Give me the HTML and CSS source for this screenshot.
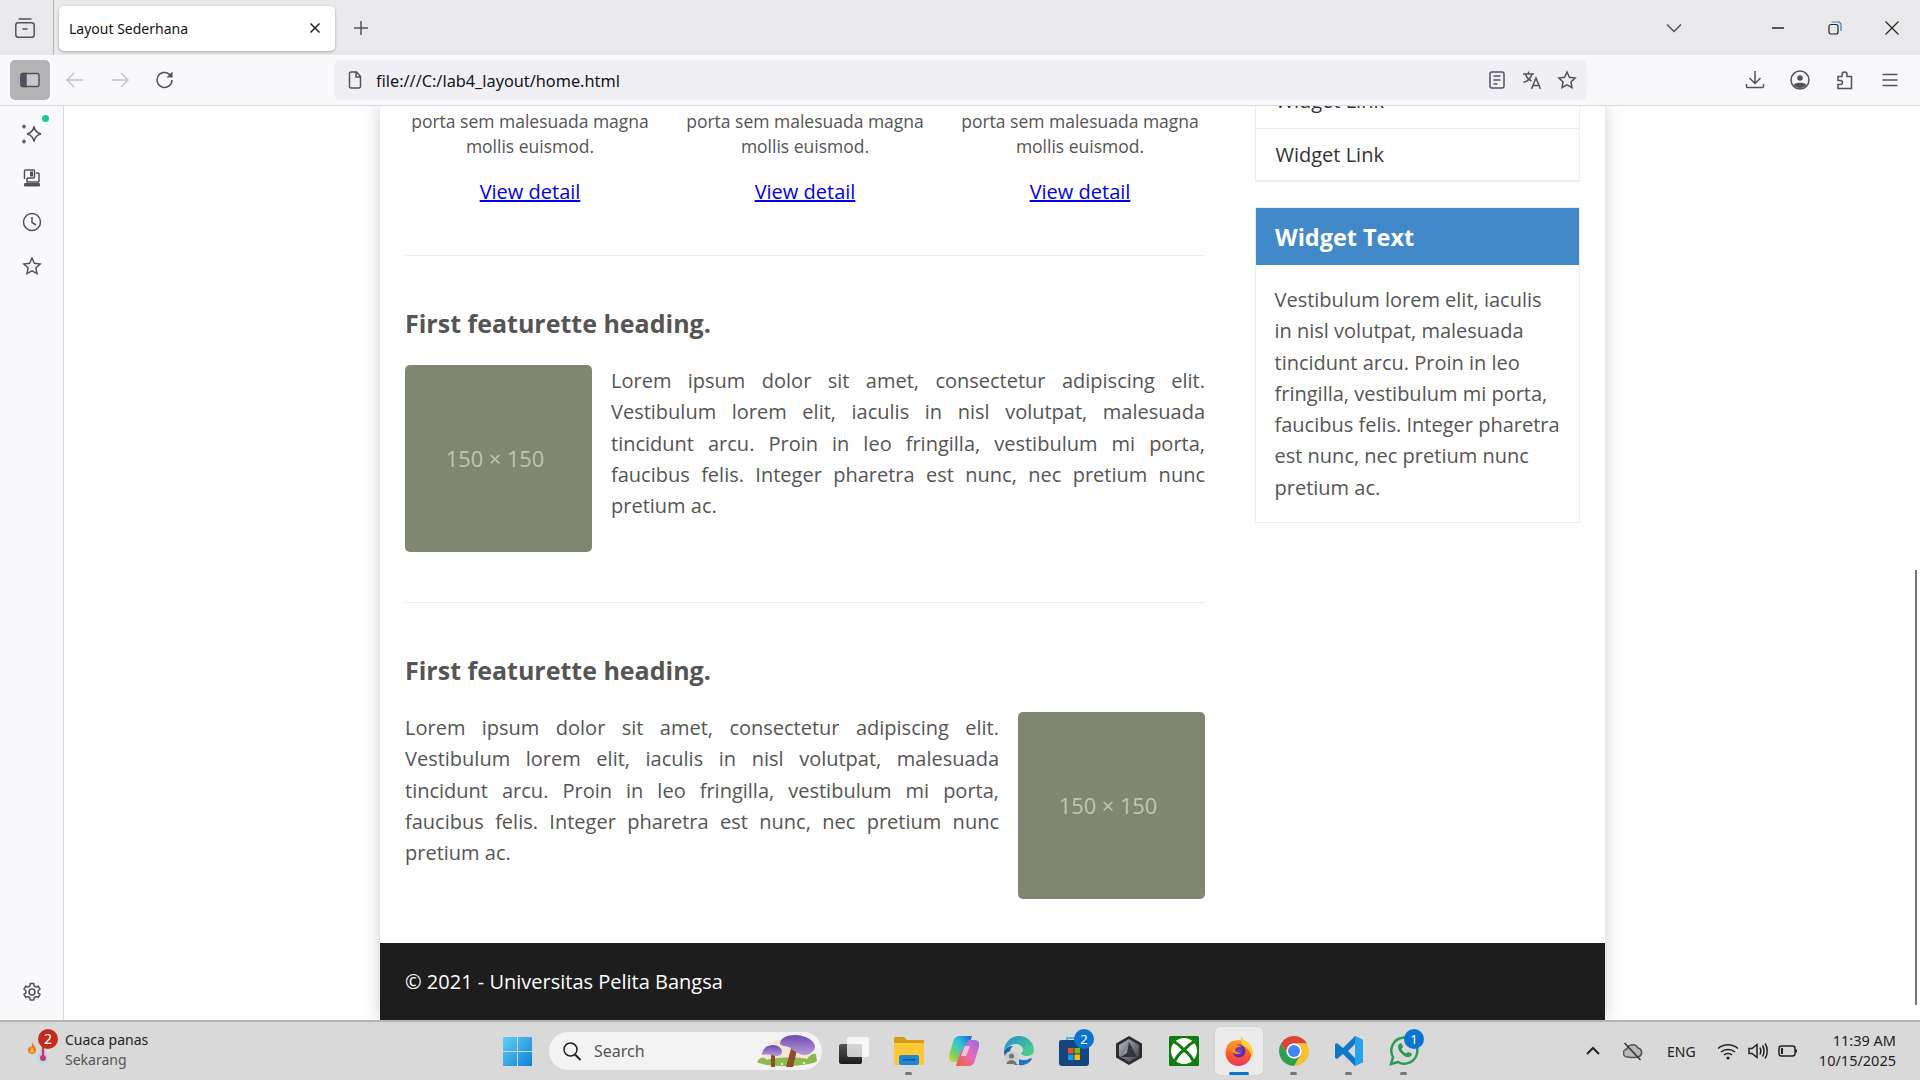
FILE: index.html
```html
<!DOCTYPE html>
<html lang="id">
<head>
<meta charset="utf-8">
<title>Layout Sederhana</title>
<link rel="stylesheet" href="styles.css">
</head>
<body>
<div class="frame">
  <header class="tabstrip">
    <div class="tabs-btn">
      <svg class="ic20" viewBox="0 0 20 20"><rect x=".8" y="4.800" width="18.400" height="14.400" rx="2.500"/><path d="M3.500 1h13M7.500 11h5"/></svg>
    </div>
    <div class="tab">
      <span class="tab-title">Layout Sederhana</span>
      <svg class="ic12 dark" viewBox="0 0 12 12"><path d="M1.500 1.500l9 9M10.500 1.500l-9 9"/></svg>
    </div>
    <div class="newtab"><svg class="ic16" viewBox="0 0 16 16"><path d="M8 1v14M1 8h14"/></svg></div>
    <div class="listtabs"><svg class="ic16" viewBox="0 0 16 16"><path d="M1 4.500l7 7 7-7"/></svg></div>
    <div class="winbtn"><svg class="ic12 dark" viewBox="0 0 12 12"><path d="M0 6h12"/></svg></div>
    <div class="winbtn"><svg class="ic14 dark" viewBox="0 0 14 14"><rect x="1" y="3.500" width="9" height="9.500" rx="2"/><path d="M3.500 1h6a3 3 0 0 1 3.500 3v6" stroke="#3b7fc4"/></svg></div>
    <div class="winbtn"><svg class="ic14 dark" viewBox="0 0 14 14"><path d="M.5.500l13 13M13.500.500l-13 13"/></svg></div>
  </header>

  <nav class="toolbar">
    <div class="tbtn active"><svg class="ic20" viewBox="0 0 20 20"><rect x="1" y="3.500" width="18" height="13" rx="2" fill="#c8c8cc"/><path d="M3 3.500h3v13H3a2 2 0 0 1-2-2v-9a2 2 0 0 1 2-2z" fill="#52525e"/></svg></div>
    <div class="tbtn muted"><svg class="ic20" viewBox="0 0 20 20"><path d="M18 10H2M9 3l-7 7 7 7"/></svg></div>
    <div class="tbtn muted"><svg class="ic20" viewBox="0 0 20 20"><path d="M2 10h16M11 3l7 7-7 7"/></svg></div>
    <div class="tbtn"><svg class="ic20" viewBox="0 0 20 20"><path d="M17 10a7.500 7.500 0 1 1-2.500-5.600L17 6.500"/><path d="M17.500 1.500v6h-6z" fill="#52525e" stroke="none"/></svg></div>
    <div class="urlbar">
      <svg class="ic20" viewBox="0 0 20 20"><path d="M4.500 3.500A1.500 1.500 0 0 1 6 2h5.500l4 4.500V16.500A1.500 1.500 0 0 1 14 18H6a1.500 1.500 0 0 1-1.500-1.500zM11 2v5h4.500"/></svg>
      <span class="urltext">file:///C:/lab4_layout/home.html</span>
      <div class="urlicons">
        <svg class="ic20" viewBox="0 0 20 20"><rect x="3" y="2" width="14" height="16" rx="2"/><path d="M6.500 6h7M6.500 10h7M6.500 14h4"/></svg>
        <svg class="ic20" viewBox="0 0 20 20"><path d="M1 4h11M6.500 1.500V4M10 4c-1 4-4 7-8.500 8.500M3.500 4c1 3.500 3 5.500 6 7M9.500 19l4.500-11 4.500 11M11 15.500h6"/></svg>
        <svg class="ic20" viewBox="0 0 20 20"><path d="M10 2l2.400 5.300 5.700.7-4.200 3.900 1.100 5.700L10 14.800l-5 2.800 1.100-5.700L1.900 8l5.700-.7z"/></svg>
      </div>
    </div>
    <div class="tools">
      <div class="tbtn"><svg class="ic20" viewBox="0 0 20 20"><path d="M10 1v12M4.500 8l5.500 5.500L15.500 8M1.500 14v2.500a1 1 0 0 0 1 1h15a1 1 0 0 0 1-1V14"/></svg></div>
      <div class="tbtn"><svg class="ic20" viewBox="0 0 20 20"><circle cx="10" cy="10" r="9"/><circle cx="10" cy="8" r="2.800" fill="#52525e" stroke="none"/><path d="M3.500 14.500c2-2.200 11-2.200 13 0-1.500 2-4 3.500-6.500 3.500s-5-1.500-6.500-3.500z" fill="#52525e" stroke="none"/></svg></div>
      <div class="tbtn"><svg class="ic20" viewBox="0 0 20 20"><path d="M3 6h4V4a2.500 2.500 0 0 1 5 0v2h4.500v12H3v-4h2.500a2 2 0 0 0 0-4H3z" transform="translate(0 .5)"/></svg></div>
      <div class="tbtn"><svg class="ic20" viewBox="0 0 20 20"><path d="M2.500 4.500h15M2.500 10h15M2.500 15.500h15"/></svg></div>
    </div>
  </nav>

  <div class="browser">
    <aside class="sidebar">
      <div class="sideitem sparkle-item">
        <span class="dot"></span>
        <svg class="ic22" viewBox="0 0 22 22"><path d="M13 3.500c.8 4 3 6.500 7 7.500-4 .8-6.200 3.200-7 7.500-.8-4.300-3-6.700-7-7.500 4-1 6.200-3.500 7-7.500zM3 1.500v4M1 3.500h4M3 16.500v4M1 18.500h4"/></svg>
      </div>
      <div class="sideitem"><svg class="ic20" viewBox="0 0 20 20"><path d="M2.500 11V3a1 1 0 0 1 1-1h8a1 1 0 0 1 1 1v6a1 1 0 0 1-1 1H5M14 5h2a1 1 0 0 1 1 1v8M5 10v4h12"/><rect x="2" y="15" width="16" height="3.500" rx="1" fill="#52525e" stroke="none"/><rect x="8" y="3.500" width="3" height="5" fill="#52525e" stroke="none"/></svg></div>
      <div class="sideitem"><svg class="ic20" viewBox="0 0 20 20"><circle cx="10" cy="10" r="8.500"/><path d="M10 5v5.500l4 2.500"/></svg></div>
      <div class="sideitem"><svg class="ic20" viewBox="0 0 20 20"><path d="M10 2l2.400 5.300 5.700.7-4.200 3.900 1.100 5.700L10 14.800l-5 2.800 1.100-5.700L1.900 8l5.700-.7z"/></svg></div>
      <div class="sideitem gear"><svg class="ic20" viewBox="0 0 20 20"><circle cx="10" cy="10" r="3"/><path d="M8.300 1.500h3.400l.5 2.500 1.700 1 2.400-.8 1.700 3-1.900 1.600v2l1.900 1.600-1.700 3-2.400-.8-1.700 1-.5 2.500H8.300l-.5-2.500-1.700-1-2.400.8-1.700-3 1.900-1.600v-2L2 7.200l1.700-3 2.400.8 1.700-1z"/></svg></div>
    </aside>

    <main class="viewport">
      <div class="wrapper">
        <div class="content">
          <section class="main">
            <div class="cols">
              <div class="col"><p class="col-text">porta sem malesuada magna mollis euismod.</p><a class="detail" href="#">View detail</a></div>
              <div class="col"><p class="col-text">porta sem malesuada magna mollis euismod.</p><a class="detail" href="#">View detail</a></div>
              <div class="col"><p class="col-text">porta sem malesuada magna mollis euismod.</p><a class="detail" href="#">View detail</a></div>
            </div>
            <hr class="rule first-rule">
            <article class="feature">
              <h2 class="feature-title">First featurette heading.</h2>
              <div class="feature-row">
                <div class="thumb"><span>150 × 150</span></div>
                <p class="feature-text">Lorem ipsum dolor sit amet, consectetur adipiscing elit. Vestibulum lorem elit, iaculis in nisl volutpat, malesuada tincidunt arcu. Proin in leo fringilla, vestibulum mi porta, faucibus felis. Integer pharetra est nunc, nec pretium nunc pretium ac.</p>
              </div>
            </article>
            <hr class="rule">
            <article class="feature">
              <h2 class="feature-title">First featurette heading.</h2>
              <div class="feature-row reverse">
                <div class="thumb"><span>150 × 150</span></div>
                <p class="feature-text">Lorem ipsum dolor sit amet, consectetur adipiscing elit. Vestibulum lorem elit, iaculis in nisl volutpat, malesuada tincidunt arcu. Proin in leo fringilla, vestibulum mi porta, faucibus felis. Integer pharetra est nunc, nec pretium nunc pretium ac.</p>
              </div>
            </article>
          </section>
          <section class="aside">
            <ul class="links">
              <li class="link">Widget Link</li>
              <li class="link">Widget Link</li>
            </ul>
            <div class="widget">
              <h3 class="widget-title">Widget Text</h3>
              <p class="widget-body">Vestibulum lorem elit, iaculis in nisl volutpat, malesuada tincidunt arcu. Proin in leo fringilla, vestibulum mi porta, faucibus felis. Integer pharetra est nunc, nec pretium nunc pretium ac.</p>
            </div>
          </section>
        </div>
        <footer class="footer">© 2021 - Universitas Pelita Bangsa</footer>
      </div>
      <div class="scrollthumb"></div>
    </main>
  </div>

  <div class="taskbar">
    <div class="weather">
      <div class="weather-ic">
        <svg class="ic28 plain" viewBox="0 0 28 28"><path d="M8 5c1 3 4 4.500 4 8 0 2.500-2 4-4 4s-4-1.500-4-4c0-2 1-3 2-4 0 1 .5 1.500 1 1.500C8 9 8 7 8 5z" fill="#f0702a"/><path d="M8 10.500c1 1.200 2 2.200 2 3.500 0 1.200-1 2-2 2s-2-.8-2-2c0-1.300 1.200-2.300 2-3.500z" fill="#fbc02d"/><circle cx="19" cy="21" r="6" fill="#b9d8f5"/><rect x="17.800" y="4" width="2.400" height="17" fill="#d6335a"/><circle cx="19" cy="21" r="3" fill="#d6335a"/></svg>
        <span class="badge red">2</span>
      </div>
      <div class="weather-text"><span>Cuaca panas</span><span class="sub">Sekarang</span></div>
    </div>
    <div class="center">
      <div class="winlogo"><svg class="ic29 plain" viewBox="0 0 29 29"><defs><linearGradient id="w1" x1="0" y1="0" x2="1" y2="1"><stop offset="0" stop-color="#5fd0f5"/><stop offset="1" stop-color="#0f7fd6"/></linearGradient></defs><path d="M0 1a1 1 0 0 1 1-1h13v14H0zM15 0h13a1 1 0 0 1 1 1v13H15zM0 15h14v14H1a1 1 0 0 1-1-1zM15 15h14v13a1 1 0 0 1-1 1H15z" fill="url(#w1)"/></svg></div>
      <div class="search">
        <svg class="ic20 dark" viewBox="0 0 20 20"><circle cx="8.500" cy="8.500" r="6.500"/><path d="M13 13.500l5.500 5.500" stroke-width="2"/></svg>
        <span class="search-text">Search</span>
        <svg class="mush plain" viewBox="0 0 60 32"><defs><linearGradient id="m1" x1="0" y1="0" x2="0" y2="1"><stop offset="0" stop-color="#6d4bb0"/><stop offset="1" stop-color="#b79ad8"/></linearGradient></defs><ellipse cx="30" cy="18" rx="24" ry="14" fill="#f3e6d6"/><path d="M0 27c4-6 7-5 10-2 8-3 30-3 40-1 3-4 6-6 9-5l1 7c-8 6-50 7-60 1z" fill="#8fb84f"/><path d="M35 10l6 1-5 21h-7z" fill="#8a4f2a"/><path d="M14 18h4v14h-4z" fill="#8a4f2a"/><path d="M23 9C23 3 30 0 38 0c10 0 19 5 20 11 .5 4-4 9-11 9-7-1-11-5-15-8-3-1-7-1-9-3z" fill="url(#m1)"/><path d="M5 20c0-6 5-10 11-10 5 0 9 3 9 7 0 2-2 4-6 4-5-1-10-2-14-1z" fill="url(#m1)"/><circle cx="25" cy="29" r="1" fill="#fff"/><circle cx="47" cy="28" r="1" fill="#fff"/></svg>
      </div>
      <div class="tb"><svg class="ic30 plain" viewBox="0 0 30 30"><defs><linearGradient id="t1" x1="0" y1="0" x2="0" y2="1"><stop offset="0" stop-color="#555"/><stop offset="1" stop-color="#1c1c1c"/></linearGradient></defs><rect x="0" y="8" width="23" height="20" rx="2" fill="url(#t1)"/><rect x="8" y="1" width="22" height="20" rx="2" fill="#fff" opacity=".75"/></svg></div>
      <div class="tb pinned"><svg class="ic30 plain" viewBox="0 0 30 30"><path d="M0 2a1 1 0 0 1 1-1h9l3 3h16a1 1 0 0 1 1 1v3H0z" fill="#d39e13"/><path d="M0 7h30v21a1 1 0 0 1-1 1H1a1 1 0 0 1-1-1z" fill="#fcc934"/><rect x="5" y="19" width="20" height="10" rx="2" fill="#1d87d4"/><rect x="9" y="23" width="12" height="1.500" fill="#0b4f85"/></svg></div>
      <div class="tb"><svg class="ic30 plain" viewBox="0 0 30 30"><defs><linearGradient id="c1" x1="1" y1="0" x2="0" y2="1"><stop offset="0" stop-color="#1a5fe0"/><stop offset=".4" stop-color="#2cc4d8"/><stop offset=".75" stop-color="#7dd35a"/><stop offset="1" stop-color="#f5d040"/></linearGradient><linearGradient id="c2" x1="1" y1="0" x2="0" y2="1"><stop offset="0" stop-color="#9a6ae8"/><stop offset=".5" stop-color="#e86ab8"/><stop offset="1" stop-color="#f2602c"/></linearGradient></defs><path d="M11 0h12l-4 13-9 13H4c-3 0-5-3-4-7L4 6c1-4 3-6 7-6z" fill="url(#c1)"/><path d="M19 30H7l4-13 9-13h6c3 0 5 3 4 7l-4 13c-1 4-3 6-7 6z" fill="url(#c2)"/><path d="M16 10h5l-4 10h-5z" fill="#fff" opacity=".6"/></svg></div>
      <div class="tb"><svg class="ic30 plain" viewBox="0 0 30 30"><defs><linearGradient id="e1" x1="0" y1="0" x2="1" y2="1"><stop offset="0" stop-color="#1d8fd8"/><stop offset="1" stop-color="#54d67a"/></linearGradient></defs><path d="M0 14C1 5 8 0 15 0c9 0 15 7 15 14 0 4-3 6-7 6-3 0-6-1-6-3 2-1 3-3 1-6-3-4-10-4-14 0-2 2-3 2-4 3z" fill="url(#e1)"/><path d="M0 15c2-3 5-5 9-5-3 2-4 7-2 12 1 4 4 6 8 7C7 30 0 24 0 15z" fill="#1564b0"/><path d="M15 29c4 1 10-1 13-6l-1-1c-3 2-9 3-12 1z" fill="#1c73c4"/><circle cx="7.500" cy="22" r="7" fill="#cfcfcf"/><circle cx="7.500" cy="20" r="2.600" fill="#777"/><path d="M2.500 28c.5-3 3-4 5-4s4.500 1 5 4z" fill="#777"/></svg></div>
      <div class="tb"><svg class="ic30 plain" viewBox="0 0 30 30"><path d="M0 6a2 2 0 0 1 2-2h26a2 2 0 0 1 2 2v21a3 3 0 0 1-3 3H3a3 3 0 0 1-3-3z" fill="#17457e"/><path d="M8 4V2h10v2" fill="none" stroke="#4fb4f0" stroke-width="2"/><rect x="9" y="12" width="5.500" height="5.500" fill="#f25022"/><rect x="15.500" y="12" width="5.500" height="5.500" fill="#7fba00"/><rect x="9" y="18.500" width="5.500" height="5.500" fill="#00a4ef"/><rect x="15.500" y="18.500" width="5.500" height="5.500" fill="#ffb900"/></svg><span class="badge blue">2</span></div>
      <div class="tb"><svg class="ic30 plain" viewBox="0 0 30 30"><defs><linearGradient id="h1" x1="0" y1="0" x2="1" y2="1"><stop offset="0" stop-color="#b8bcc2"/><stop offset="1" stop-color="#3a3c40"/></linearGradient></defs><path d="M15 0l13 7.500v14L15 29 2 21.500v-14z" fill="#2b2d31"/><path d="M15 3l10 6v11L15 26 5 20v-11z" fill="url(#h1)"/><path d="M15 6l8 15H7z" fill="#33353a"/><path d="M15 6l-8 15 6-4z" fill="#8d9198"/></svg></div>
      <div class="tb"><svg class="ic30 plain" viewBox="0 0 30 30"><rect width="30" height="30" rx="1.500" fill="#107c10"/><circle cx="15" cy="15" r="13" fill="#fff"/><path d="M4 5Q11 9 15 14 19 9 26 5M5 27Q8 19 15 14 22 19 25 27" fill="none" stroke="#107c10" stroke-width="3"/></svg></div>
      <div class="tb running"><svg class="ic30 plain" viewBox="0 0 30 30"><defs><linearGradient id="f1" x1="0" y1="0" x2="0" y2="1"><stop offset="0" stop-color="#ffa02e"/><stop offset=".55" stop-color="#ff5a2c"/><stop offset="1" stop-color="#f0345e"/></linearGradient><radialGradient id="f2"><stop offset="0" stop-color="#8f3fd0"/><stop offset="1" stop-color="#4b2aa0"/></radialGradient></defs><circle cx="14.500" cy="17" r="13" fill="url(#f1)"/><path d="M17 0c1 3 3 4 5 5 4 2 7 7 7 12 0 2-.5 4-1 5-1-6-4-10-9-12-1-3-3-6-2-10z" fill="#ffcf3a"/><circle cx="15" cy="15" r="6.500" fill="url(#f2)"/><path d="M3 10c2-3 4-4 6-5 0 2 0 3 1 4 3 0 6 0 8 2-3-.5-6 0-7 3 1 2 3 3 6 3-3 2-7 1-9-1-2-2-3-4-5-6z" fill="#ff8a1e"/></svg></div>
      <div class="tb pinned"><svg class="ic30 plain" viewBox="4 4 40 40"><path d="M24 4a20 20 0 0 1 17.320 10H24a10 10 0 0 0-8.660 15L6.680 14A20 20 0 0 1 24 4z" fill="#db4437"/><path d="M41.320 14H24a10 10 0 0 1 8.660 15L24 44A20 20 0 0 0 41.320 14z" fill="#fbc02d"/><path d="M6.680 14l8.660 15a10 10 0 0 0 17.320 0L24 44A20 20 0 0 1 6.680 14z" fill="#2e9e4f"/><circle cx="24" cy="24" r="10" fill="#fff"/><circle cx="24" cy="24" r="8" fill="#4285f4"/></svg></div>
      <div class="tb pinned"><svg class="ic30 plain" viewBox="0 0 30 30"><path d="M21 0l8 4v22l-8 4-12-12-6 5-2-1V8l2-1 6 5zM21 8l-7 7 7 7z" fill="#0f78c8"/><path d="M21 0l8 4v22l-8 4z" fill="#27a3ee"/></svg></div>
      <div class="tb pinned"><svg class="ic30 plain" viewBox="0 0 30 30"><path d="M2 28l2-7A13 13 0 1 1 9 26z" fill="none" stroke="#2a9a58" stroke-width="2.500"/><path d="M10 8c1-1 2.500-1 3 0l1 3-1.500 2c1 2 2.500 3.500 4.500 4.500l2-1.500 3 1c1 .5 1 2 0 3-2 2-5 1.500-8-1-3-2.500-5-5-5-8 0-1 .5-2 1-3z" fill="#2a9a58"/></svg><span class="badge blue">1</span></div>
    </div>
    <div class="tray">
      <svg class="ic16 dark strong" viewBox="0 0 16 16"><path d="M2 11l6-6 6 6"/></svg>
      <svg class="ic20 tray-cloud" viewBox="0 0 20 20"><path d="M5 16a4 4 0 0 1-1-8 6 6 0 0 1 11-1 4.500 4.500 0 0 1 1 8.500C14 16.500 8 16.500 5 16z" fill="#b9b9b9"/><path d="M1.500 2l16 17" stroke="#333"/></svg>
      <span class="lang">ENG</span>
      <div class="tray-icons">
        <svg class="ic20 dark" viewBox="0 0 20 20"><path d="M0 7.500c5.500-5 14.500-5 20 0M3 11c3.800-3.500 10.200-3.500 14 0M6 14c2.200-2 5.800-2 8 0"/><circle cx="10" cy="17" r="1.500" fill="#222" stroke="none"/></svg>
        <svg class="ic20 dark" viewBox="0 0 20 20"><path d="M1 7.500h3L9 3.500v13l-5-4H1zM12 6.500c1 2 1 5 0 7M14.500 4.500c2 3 2 8 0 11M17 2.500c3 4 3 11 0 15"/></svg>
        <svg class="ic20 dark" viewBox="0 0 20 20"><rect x="1" y="5" width="16" height="10" rx="2.500"/><rect x="3" y="7" width="2" height="6" fill="#222" stroke="none"/><path d="M18 8.500v3" stroke-width="2"/></svg>
      </div>
      <div class="clock"><span>11:39 AM</span><span>10/15/2025</span></div>
    </div>
  </div>
</div>
</body>
</html>
```
FILE: styles.css
```css
* { box-sizing: border-box; }
html, body { margin: 0; height: 100%; overflow: hidden; }
body { font-family: "Open Sans", sans-serif; color: #555; background: #fff; }
svg { fill: none; stroke: #52525e; stroke-width: 1.500; display: block; flex: none; }
svg.plain { stroke: none; }
svg.dark { stroke: #222; }
svg.strong { stroke-width: 2; }
.ic12 { width: 12px; height: 12px; }
.ic14 { width: 14px; height: 14px; stroke-width: 1.200; }
.ic16 { width: 16px; height: 16px; }
.ic20 { width: 20px; height: 20px; }
.ic22 { width: 22px; height: 22px; }
.ic28 { width: 28px; height: 28px; }
.ic29 { width: 29px; height: 29px; }
.ic30 { width: 30px; height: 30px; }

.frame { height: 1080px; display: flex; flex-direction: column; }

.tabstrip { height: 55px; flex: none; background: #e9e9ec; display: flex; align-items: center; }
.tabstrip > * { flex: none; }
.tabs-btn { width: 54px; height: 55px; border-right: 1px solid #b5b5b9; display: flex; align-items: center; justify-content: center; padding-right: 3px; }
.tab { width: 276px; height: 45px; margin-left: 5px; margin-top: 1px; background: #fff; border-radius: 5px; box-shadow: 0 1px 3px rgba(0,0,0,.3); display: flex; align-items: center; justify-content: space-between; padding: 0 14px 0 10px; }
.tab-title { font: 14px "Noto Sans", sans-serif; color: #15141a; }
.newtab { width: 52px; display: flex; justify-content: center; }
.listtabs { margin-left: 1267px; width: 40px; display: flex; justify-content: center; }
.winbtn { width: 57px; display: flex; justify-content: center; }
.listtabs + .winbtn { margin-left: 55px; }

.toolbar { height: 51px; flex: none; background: #f9f9fb; border-bottom: 1px solid #d8d8dc; display: flex; align-items: center; padding: 0 10px 0 10px; gap: 5px; }
.tbtn { width: 40px; height: 40px; border-radius: 5px; display: flex; align-items: center; justify-content: center; }
.tbtn.active { background: #b4b4b6; }
.tbtn.muted svg { stroke: #c4c4c8; }
.urlbar { width: 1253px; height: 40px; margin-left: 144px; background: #f0f0f4; border-radius: 6px; display: flex; align-items: center; padding: 0 10px 0 11px; }
.urltext { font: 16.300px "Noto Sans", sans-serif; color: #15141a; margin-left: 11px; padding-top: 2px; }
.urlicons { margin-left: auto; display: flex; gap: 15px; }
.tools { margin-left: auto; display: flex; gap: 5px; }

.browser { flex: 1; min-height: 0; display: flex; }
.sidebar { width: 64px; flex: none; background: #f9f9fb; border-right: 1px solid #d8d8dc; display: flex; flex-direction: column; align-items: center; padding-top: 6px; }
.sideitem { height: 44px; display: flex; align-items: center; justify-content: center; position: relative; width: 40px; }
.gear { margin-top: auto; margin-bottom: 6px; }
.dot { position: absolute; width: 7px; height: 7px; border-radius: 50%; background: #1fc7a0; right: 3px; top: 3px; }

.viewport { flex: 1; min-width: 0; background: #fff; position: relative; overflow: hidden; }
.wrapper { width: 1225px; height: 100%; margin-left: 316px; box-shadow: 0 0 16px rgba(0,0,0,.2); background: #fff; display: flex; flex-direction: column; }
.content { flex: 1; min-height: 0; display: flex; gap: 50px; padding: 3px 25px 0; }
.main { width: 800px; flex: none; }
.cols { display: flex; gap: 25px; }
.col { width: 250px; text-align: center; }
.col-text { margin: 0 0 17px; font-size: 17.500px; line-height: 25px; color: #555; }
.detail { font-size: 20px; line-height: 31px; color: #0000ee; display: inline-block; text-decoration: underline; }
.rule { border: 0; border-top: 1px solid #eee; margin: 50px 0 52px; }
.first-rule { margin-top: 48px; }
.feature-title { margin: 0 0 27px; font-size: 25px; line-height: 30px; font-weight: 700; color: #555; }
.feature-row { display: flex; gap: 19px; align-items: flex-start; }
.feature-row.reverse { flex-direction: row-reverse; }
.thumb { width: 187px; height: 187px; flex: none; border-radius: 5px; background: #7f8770; color: #bfc5b3; font-size: 21.800px; display: flex; align-items: center; justify-content: center; padding-right: 7px; }
.feature-text { margin: 0; font-size: 20px; line-height: 31.250px; color: #555; text-align: justify; }

.aside { width: 325px; flex: none; margin-top: -34px; }
.links { list-style: none; margin: 0 0 25px; padding: 0; border: 1px solid #eee; border-top: 0; border-bottom-width: 2px; }
.link { height: 54px; border-bottom: 1px solid #eee; font-size: 20px; line-height: 52px; padding-left: 19.500px; color: #333; }
.link:last-child { border-bottom: 0; height: 51px; }
.widget { border: 1px solid #eee; }
.widget-title { margin: 0; height: 57px; background: #4189c8; color: #fff; font-size: 23.440px; line-height: 58px; font-weight: 700; padding-left: 19px; }
.widget-body { margin: 0; padding: 19px 15px 19px 18.500px; font-size: 20px; line-height: 31.250px; color: #555; }

.footer { height: 77px; flex: none; background: #1d1d1d; color: #fff; font-size: 20px; line-height: 77px; padding-left: 25px; }
.scrollthumb { position: absolute; right: 3px; top: 464px; width: 2px; height: 435px; background: #777; }

.taskbar { height: 60px; flex: none; background: #d9d9d9; border-top: 2px solid #b4b4b4; display: flex; align-items: center; font-family: "Noto Sans", sans-serif; color: #222; }
.weather { width: 490px; flex: none; display: flex; align-items: center; padding-left: 24px; }
.weather-ic { width: 36px; height: 36px; position: relative; display: flex; align-items: center; margin-right: 5px; }
.weather-text { display: flex; flex-direction: column; font-size: 14px; line-height: 20px; padding-bottom: 2px; }
.weather-text .sub { color: #555; }
.badge { position: absolute; border-radius: 50%; color: #fff; font-size: 13px; width: 20px; height: 20px; line-height: 20px; text-align: center; }
.badge.red { background: #c42b1c; left: 14px; top: -4px; font-size: 14px; }
.badge.blue { background: #0b74cf; right: 7px; top: 2px; }
.center { display: flex; align-items: center; height: 48px; width: 942px; flex: none; }
.winlogo { width: 55px; display: flex; justify-content: center; }
.search { width: 273px; height: 38px; margin: 0 4px; border-radius: 19px; background: #f3f3f3; display: flex; align-items: center; padding: 0 5px 0 13px; }
.search-text { font-size: 16px; color: #555; margin-left: 12px; }
.mush { width: 60px; height: 32px; margin-left: auto; }
.tb { width: 55px; height: 48px; position: relative; display: flex; align-items: center; justify-content: center; border-radius: 5px; }
.tb::after { content: ""; position: absolute; left: 24px; bottom: 0; width: 7px; height: 3px; border-radius: 2px; }
.tb.pinned::after { background: #777; }
.tb.running { background: #ebebeb; width: 48px; margin: 0 3.500px; box-shadow: 0 0 1px rgba(0,0,0,.2); }
.tb.running::after { left: 14px; width: 20px; background: #0b74cf; }
.tray { flex: 1; display: flex; align-items: center; padding-left: 153px; }
.tray-cloud { margin-left: 22px; }
.lang { font-size: 14px; margin-left: 24px; color: #222; }
.tray-icons { display: flex; gap: 10px; margin-left: 22px; }
.clock { margin-left: auto; margin-right: 24px; display: flex; flex-direction: column; align-items: flex-end; font-size: 14.500px; line-height: 20px; padding-bottom: 2px; }
```
